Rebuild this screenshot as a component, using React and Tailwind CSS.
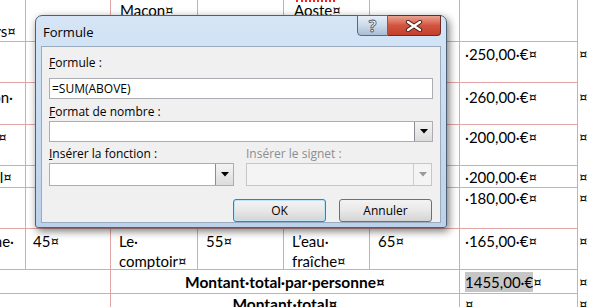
import React from 'react';

const line = 'border-[#e2a5a5]';

const Cell = ({ className = '', children }) => (
  <div className={`border-r border-b ${line} overflow-hidden ${className}`}>{children}</div>
);

const Arrow = ({ disabled }) => (
  <div
    className={`w-[18px] h-full flex items-center justify-center border-l ${
      disabled ? 'border-[#c9ccd0] bg-[#f4f4f4]' : 'border-[#8a8e94] bg-gradient-to-b from-[#f4f4f4] to-[#dcdcdc]'
    }`}
  >
    <svg width="8" height="5" viewBox="0 0 8 5">
      <path d="M0 0h8L4 4.5z" fill={disabled ? '#9a9a9a' : '#000'} />
    </svg>
  </div>
);

const DocTable = () => (
  <div
    className="-ml-[60px] grid grid-cols-[86px_85px_87px_86px_86px_90px_118px_1fr] grid-rows-[42px_41px_42px_41px_22px_41px_41px_24px_30px] text-[15px] leading-[20px] text-black"
    style={{ fontFamily: 'Lato, "Open Sans", sans-serif' }}
  >
    {/* row 0 */}
    <Cell className="flex items-end justify-end pr-[9px]">Fournisseurs¤</Cell>
    <Cell />
    <Cell className="pl-[9px]">Macon¤</Cell>
    <Cell />
    <Cell className="pl-[10px] relative">
      <div className="absolute left-[12px] top-0 w-[39px] border-t-2 border-dotted border-[#ff2020]" />
      Aoste¤
    </Cell>
    <Cell />
    <Cell />
    <div />
    {/* row 1 */}
    <Cell />
    <Cell />
    <Cell />
    <Cell />
    <Cell />
    <Cell />
    <Cell className="pl-[5px] pt-[2px]">·250,00·€¤</Cell>
    <div className="pl-[1px] pt-[2px]">¤</div>
    {/* row 2 */}
    <Cell className="flex justify-end pr-[12px] pt-[4px]">Vin·de·maison·</Cell>
    <Cell />
    <Cell />
    <Cell />
    <Cell />
    <Cell />
    <Cell className="pl-[5px] pt-[4px]">·260,00·€¤</Cell>
    <div className="pl-[1px] pt-[4px]">¤</div>
    {/* row 3 */}
    <Cell className="flex justify-end pr-[18px] pt-[2px]">¤</Cell>
    <Cell />
    <Cell />
    <Cell />
    <Cell />
    <Cell />
    <Cell className="pl-[5px] pt-[2px]">·200,00·€¤</Cell>
    <div className="pl-[1px] pt-[2px]">¤</div>
    {/* row 4 */}
    <Cell className="flex justify-end pr-[13px] pt-[1px]">Hôtel¤</Cell>
    <Cell />
    <Cell />
    <Cell />
    <Cell />
    <Cell />
    <Cell className="pl-[5px] pt-[1px]">·200,00·€¤</Cell>
    <div className="pl-[1px] pt-[1px]">¤</div>
    {/* row 5 */}
    <Cell />
    <Cell />
    <Cell />
    <Cell />
    <Cell />
    <Cell />
    <Cell className="pl-[5px]">·180,00·€¤</Cell>
    <div className="pl-[1px]">¤</div>
    {/* row 6 */}
    <Cell className="flex justify-end pr-[11px] pt-[2px]">Déjeuner·à·la·fontaine·</Cell>
    <Cell className="pl-[7px] pt-[2px]">45¤</Cell>
    <Cell className="pl-[8px] pt-[2px]">Le·<br />comptoir¤</Cell>
    <Cell className="pl-[8px] pt-[2px]">55¤</Cell>
    <Cell className="pl-[8px] pt-[2px]">L’eau·<br />fraîche¤</Cell>
    <Cell className="pl-[8px] pt-[2px]">65¤</Cell>
    <Cell className="pl-[5px] pt-[2px]">·165,00·€¤</Cell>
    <div className="pl-[1px] pt-[2px]">¤</div>
    {/* row 7 */}
    <Cell className="col-span-2" />
    <Cell className="col-span-4 text-center font-bold text-[15.5px] pt-[2px]">Montant·total·par·personne¤</Cell>
    <Cell className="pl-[5px] pt-[2px]">
      <span className="inline-block bg-[#c6c6c6] h-[20px]">1455,00·€</span>¤
    </Cell>
    <div className="pl-[1px] pt-[2px]">¤</div>
    {/* row 8 */}
    <Cell className="col-span-2" />
    <Cell className="col-span-4 text-center font-bold text-[15.5px]">Montant·total¤</Cell>
    <Cell className="pl-[5px]">¤</Cell>
    <div className="pl-[1px]">¤</div>
  </div>
);

const Dialog = () => (
  <div
    className="absolute left-[35px] top-[15px] w-[412px] h-[213px] flex flex-col px-[5px] pb-[4px] rounded-t-[7px] rounded-b-[3px] border border-[#4f6073] bg-gradient-to-b from-[#d5e5f6] via-[#c8dcf1] to-[#bcd2ea] shadow-[2px_3px_9px_rgba(0,0,0,0.55)] text-[12px] text-black"
    style={{ fontFamily: '"Open Sans", "Noto Sans", sans-serif' }}
  >
    <div className="h-[30px] flex items-start justify-between">
      <span className="pl-[2px] pt-[8px] leading-[16px] text-[13px]">Formule</span>
      <div className="flex -mt-[1px] h-[21px]">
        <div className="w-[31px] h-full rounded-bl-[4px] border border-[#566a80] bg-gradient-to-b from-[#e6eef7] via-[#ccdaea] to-[#a9bdd3] flex items-center justify-center">
          <span className="font-bold text-[16px] leading-none text-white [-webkit-text-stroke:0.8px_#3d4c5e]">?</span>
        </div>
        <div className="w-[53px] h-full rounded-br-[4px] border border-l-0 border-[#6b2a22] bg-gradient-to-b from-[#e9a292] via-[#d2543f] to-[#c2402c] flex items-center justify-center">
          <svg width="18" height="12" viewBox="0 0 18 12">
            <path d="M3 2L15 10M15 2L3 10" stroke="#4a1d16" strokeWidth="4.2" strokeLinecap="round" />
            <path d="M3 2L15 10M15 2L3 10" stroke="#fff" strokeWidth="2.4" strokeLinecap="round" />
          </svg>
        </div>
      </div>
    </div>
    <div className="flex-1 bg-[#f0f0f0] border border-[#9aabbf] px-[7px] pt-[8px] leading-[15px]">
      <div><span className="underline">F</span>ormule :</div>
      <div className="mt-[8px] h-[21px] bg-white border border-[#abadb3] flex items-center pl-[2px]">=SUM(ABOVE)</div>
      <div className="mt-[5px]"><span className="underline">F</span>ormat de nombre :</div>
      <div className="mt-[2px] h-[21px] bg-white border border-[#abadb3] flex justify-end">
        <Arrow />
      </div>
      <div className="mt-[4px] flex gap-[12px]">
        <div className="w-[185px]"><span className="underline">I</span>nsérer la fonction :</div>
        <div className="text-[#8d8d8d]">Insérer le signet :</div>
      </div>
      <div className="mt-[2px] flex gap-[12px]">
        <div className="w-[185px] h-[23px] bg-white border border-[#abadb3] flex justify-end">
          <Arrow />
        </div>
        <div className="w-[186px] h-[23px] bg-[#f4f4f4] border border-[#c4c8cc] flex justify-end">
          <Arrow disabled />
        </div>
      </div>
      <div className="mt-[13px] flex justify-end gap-[13px] pr-[1px]">
        <div className="w-[93px] h-[23px] rounded-[3px] border border-[#3c7fb1] bg-gradient-to-b from-[#f3f3f3] via-[#e8e8e8] to-[#d4d4d4] shadow-[inset_0_0_0_1px_#bfe3f7] flex items-center justify-center">OK</div>
        <div className="w-[93px] h-[23px] rounded-[3px] border border-[#707070] bg-gradient-to-b from-[#f3f3f3] via-[#e8e8e8] to-[#d4d4d4] flex items-center justify-center">Annuler</div>
      </div>
    </div>
  </div>
);

export default function App() {
  return (
    <div className="relative w-[600px] h-[307px] overflow-hidden bg-white">
      <DocTable />
      <Dialog />
    </div>
  );
}
